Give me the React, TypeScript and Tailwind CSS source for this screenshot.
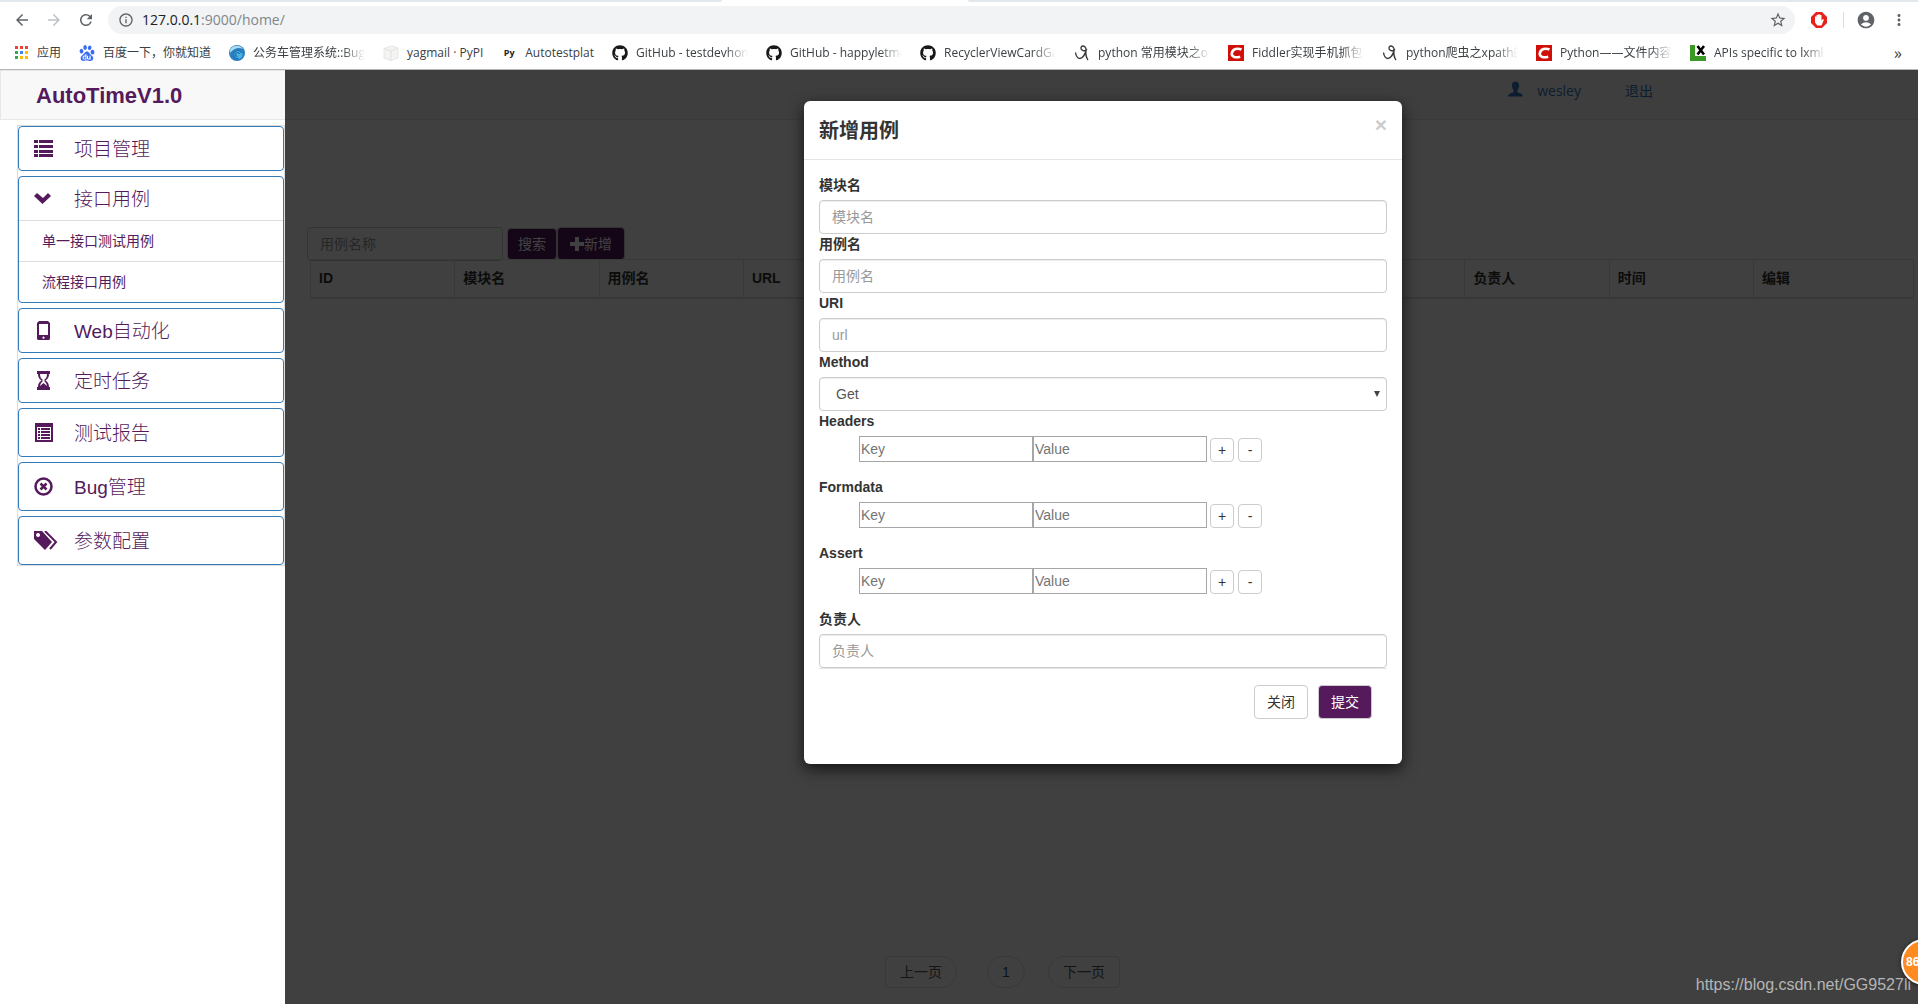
import { useState } from 'react';
import type { ReactNode } from 'react';
import { FaGithub } from 'react-icons/fa';
import {
  MdAccountCircle,
  MdArrowBack,
  MdArrowForward,
  MdInfoOutline,
  MdMoreVert,
  MdRefresh,
  MdStarBorder,
} from 'react-icons/md';
import { SiBaidu } from 'react-icons/si';

interface Bookmark {
  label: string;
  icon: ReactNode;
  clipped?: boolean;
}

interface MenuItem {
  label: string;
  icon: ReactNode;
  tall?: boolean;
  children?: string[];
}

const AppsIcon = () => (
  <svg viewBox="0 0 16 16" className="w-4 h-4">
    {['#ea4335', '#ea4335', '#ea4335', '#34a853', '#4285f4', '#fbbc05', '#34a853', '#fbbc05', '#fbbc05'].map((c, i) => (
      <rect key={i} x={2 + (i % 3) * 5} y={1 + Math.floor(i / 3) * 5} width="3" height="3" fill={c} />
    ))}
  </svg>
);

const GlobeIcon = () => (
  <svg viewBox="0 0 16 16" className="w-4 h-4">
    <circle cx="8" cy="8" r="8" fill="#2b7fc0" />
    <path d="M1 5C3 0 11-1 14 4C10 2 5 3 1 8z" fill="#a9dcf3" />
    <circle cx="9" cy="9.500" r="4.500" fill="#48b3e0" />
    <path d="M12.500 8a4 4 0 1 0-3 5.500M10.500 9a2 2 0 1 0-2 2.500" fill="none" stroke="#1c6fb0" strokeWidth="1.200" />
  </svg>
);

const BoxIcon = () => (
  <svg viewBox="0 0 16 16" className="w-4 h-4">
    <path d="M1 3.500L9 1l6 2v10l-7 2.500L1 13z" fill="#f4f4f2" stroke="#e6e6e6" />
    <path d="M1 3.500L8 6v9.500M8 6l7-3" fill="none" stroke="#e2e2e2" />
  </svg>
);

const PyIcon = () => <span className="w-4 text-center text-[9px] font-bold text-[#222]">Py</span>;

const PenIcon = () => (
  <svg viewBox="0 0 16 16" className="w-4 h-4" fill="none" stroke="#3a3a3a" strokeWidth="1.400">
    <path d="M1.500 7.500C2 11 4 13.500 6 13.500c2.500 0 6-5 6-9C12 2 10 .800 8.500 1S6.200 3.600 8 5s5 .500 4.500-1M12 5c-.500 4 .500 8 2 10" />
  </svg>
);

const CsdnIcon = () => (
  <svg viewBox="0 0 16 16" className="w-4 h-4">
    <rect width="16" height="16" fill="#d01008" />
    <path d="M13.500 4.500C10 3 4.500 3.500 3.800 8.300c-.5 4 4.200 4.700 8.400 3.400" fill="none" stroke="#fff" strokeWidth="2.600" />
  </svg>
);

const LxmlIcon = () => (
  <svg viewBox="0 0 16 16" className="w-4 h-4">
    <rect width="16" height="16" fill="#3b9a25" />
    <rect x="5" width="11" height="11" fill="#fff" />
    <path d="M7.500 1l6.500 8.500M14 1L7.500 9.500" stroke="#000" strokeWidth="2.600" />
  </svg>
);

const bookmarks: Bookmark[] = [
  { label: '应用', icon: <AppsIcon /> },
  { label: '百度一下，你就知道', icon: <SiBaidu className="w-4 h-4 text-[#3a6cf5]" /> },
  { label: '公务车管理系统::Bug管理', icon: <GlobeIcon />, clipped: true },
  { label: 'yagmail · PyPI', icon: <BoxIcon /> },
  { label: 'Autotestplat', icon: <PyIcon /> },
  { label: 'GitHub - testdevhome', icon: <FaGithub className="w-4 h-4 text-[#191717]" />, clipped: true },
  { label: 'GitHub - happyletmego', icon: <FaGithub className="w-4 h-4 text-[#191717]" />, clipped: true },
  { label: 'RecyclerViewCardGallery', icon: <FaGithub className="w-4 h-4 text-[#191717]" />, clipped: true },
  { label: 'python 常用模块之os', icon: <PenIcon />, clipped: true },
  { label: 'Fiddler实现手机抓包——', icon: <CsdnIcon />, clipped: true },
  { label: 'python爬虫之xpath的使用', icon: <PenIcon />, clipped: true },
  { label: 'Python——文件内容', icon: <CsdnIcon />, clipped: true },
  { label: 'APIs specific to lxml.etree', icon: <LxmlIcon />, clipped: true },
];

const menu: MenuItem[] = [
  {
    label: '项目管理',
    icon: <path d="M0 1h4v3H0zM5 1h14v3H5zM0 6h4v3H0zM5 6h14v3H5zM0 11h4v3H0zM5 11h14v3H5zM0 15h4v3H0zM5 15h14v3H5z" />,
  },
  {
    label: '接口用例',
    icon: <path d="M0 7l3-3 6 5 5-5 3 3-8.500 8z" />,
    children: ['单一接口测试用例', '流程接口用例'],
  },
  {
    label: 'Web自动化',
    icon: <path fillRule="evenodd" d="M5 0h9l2 2v16l-1 1H4l-1-1V2zM5 3v11h9V3zM9.500 15l.5 1 1 .2-.8.700.2 1-.9-.5-.9.500.2-1-.8-.700 1-.2z" />,
  },
  {
    label: '定时任务',
    icon: <path fillRule="evenodd" d="M3 0h13v3h-1c0 3-1 5-3.500 6.500C14 11 15 13 15 16h1v3H3v-3h1c0-3 1-5 3.500-6.500C5 8 4 6 4 3H3zM6 3c0 3 1 4.500 2.500 5.500v2C7 12 6.300 13 6 15l3.500-3 3.500 3c-.3-2-1-3-2.500-4.500v-2C12 7.500 13 6 13 3z" />,
  },
  {
    label: '测试报告',
    tall: true,
    icon: <path fillRule="evenodd" d="M1 0h18v19H1zM3 4v13h14V4zM4 5h2v2H4zM7 5h9v2H7zM4 8h2v2H4zM7 8h9v2H7zM4 11h2v2H4zM7 11h9v2H7zM4 14h2v2H4zM7 14h9v2H7z" />,
  },
  {
    label: 'Bug管理',
    tall: true,
    icon: (
      <>
        <circle cx="9.500" cy="9.500" r="8" fill="none" stroke="currentColor" strokeWidth="2.500" />
        <path d="M6.500 6.500l6 6M12.500 6.500l-6 6" stroke="currentColor" strokeWidth="2.500" />
      </>
    ),
  },
  {
    label: '参数配置',
    tall: true,
    icon: (
      <>
        <path fillRule="evenodd" d="M0 0h8l10 11-7 8L0 8zM4 2a2 2 0 1 0 .1 0z" />
        <path d="M11 0l11 11-6 7" fill="none" stroke="currentColor" strokeWidth="2" />
      </>
    ),
  },
];

const columns = ['ID', '模块名', '用例名', 'URL', 'Method', 'Headers', 'Formdata', 'Assert', '负责人', '时间', '编辑'];

const inputClass =
  'block w-full h-[34px] px-3 text-sm text-[#555] bg-white border border-[#ccc] rounded placeholder:text-[#999] shadow-[inset_0_1px_1px_rgba(0,0,0,0.075)]';

function BrowserBar() {
  return (
    <header className="bg-white border-b border-[#b6b4b6] font-['Open_Sans','Noto_Sans_CJK_SC',sans-serif]">
      <div className="flex h-[2px]">
        <div className="w-[722px] bg-[#e3e8ec] rounded-br" />
        <div className="w-[246px]" />
        <div className="flex-1 bg-[#e3e8ec] rounded-bl" />
      </div>
      <div className="flex items-center h-9 pl-[13px] pr-2.5 text-[#5f6368]">
        <button aria-label="Back"><MdArrowBack className="w-[18px] h-[18px]" /></button>
        <button aria-label="Forward" className="ml-[14px] text-[#bdc1c6]"><MdArrowForward className="w-[18px] h-[18px]" /></button>
        <button aria-label="Reload" className="ml-[14px]"><MdRefresh className="w-[18px] h-[18px]" /></button>
        <div className="flex flex-1 items-center h-7 ml-[13px] pl-2.5 pr-2 rounded-full bg-[#f1f3f4] text-sm">
          <MdInfoOutline className="w-4 h-4 mr-2" />
          <span className="text-[#202124]">127.0.0.1</span>
          <span className="text-[#80868b]">:9000/home/</span>
          <button aria-label="Bookmark this page" className="ml-auto"><MdStarBorder className="w-[18px] h-[18px]" /></button>
        </div>
        <button aria-label="AdBlock" className="ml-4">
          <svg viewBox="0 0 16 16" className="w-4 h-4">
            <path d="M5 0h6l5 5v6l-5 5H5l-5-5V5z" fill="#e8201c" />
            <path d="M4 8V5c0-1 1.500-1 1.500 0V3.500c0-1 1.700-1 1.700 0V2.800c0-1 1.700-1 1.700 0v.7c0-1 1.600-1 1.600 0V8.500l1-1c.8-.6 1.700 0 1.200.8L10.500 13.500H6.300L4 10.500z" fill="#fff" />
          </svg>
        </button>
        <span className="w-px h-4 ml-4 bg-[#dadce0]" />
        <button aria-label="Profile" className="ml-3"><MdAccountCircle className="w-5 h-5" /></button>
        <button aria-label="Menu" className="ml-[14px]"><MdMoreVert className="w-[18px] h-[18px]" /></button>
      </div>
      <nav className="flex items-center h-[31px] pl-[13px] pr-4 pb-0.5 gap-[18px] text-xs text-[#3c4043]">
        {bookmarks.map((b, i) => (
          <a key={i} href="#" className="flex items-center gap-2 shrink-0">
            {b.icon}
            <span
              className={
                b.clipped
                  ? 'w-28 overflow-hidden whitespace-nowrap [mask-image:linear-gradient(to_right,#000_80%,transparent)]'
                  : 'whitespace-nowrap'
              }
            >
              {b.label}
            </span>
          </a>
        ))}
        <button aria-label="More bookmarks" className="ml-auto text-base leading-4">»</button>
      </nav>
    </header>
  );
}

function Sidebar() {
  return (
    <aside className="w-[285px] shrink-0 bg-white text-[#551a5b]">
      <div className="h-[50px] pl-[35px] flex items-center bg-[#f8f8f8] border border-r-0 border-[#e7e7e7]">
        <h1 className="text-[22px] font-bold">AutoTimeV1.0</h1>
      </div>
      <nav className="mt-[5px] ml-[17px] border border-[#ddd] flex flex-col gap-[5px]">
        {menu.map(item => (
          <div key={item.label} className="border border-[#337ab7] rounded">
            <a href="#" className={`flex items-center pl-[15px] ${item.tall ? 'h-[47px]' : 'h-[43px]'}`}>
              <svg viewBox="0 0 24 19" className="w-6 h-[19px] mr-4" fill="currentColor">{item.icon}</svg>
              <span className="pt-[3px] text-[19px] font-light">{item.label}</span>
            </a>
            {item.children?.map(child => (
              <a key={child} href="#" className="flex items-center h-[41px] pl-[23px] text-sm border-t border-[#ddd]">
                {child}
              </a>
            ))}
          </div>
        ))}
      </nav>
    </aside>
  );
}

function CaseList() {
  return (
    <div className="flex flex-col flex-1">
      <div className="flex items-start h-[50px] pt-[11px] pr-[265px] justify-end text-sm text-[#337ab7] bg-[#f8f8f8] border-b border-[#e7e7e7] font-['Open_Sans','Noto_Sans_CJK_SC',sans-serif]">
        <a href="#" className="flex">
          <svg viewBox="0 0 14 14" className="w-[15px] h-4 mr-[14px]" fill="currentColor">
            <path d="M7 0c2.300 0 3.500 1.700 3.400 4C10.300 6 9.500 7.500 8.700 8.300v1.500c2 1 5.300 1.600 5.300 4.200H0c0-2.600 3.300-3.200 5.300-4.200V8.300C4.500 7.500 3.700 6 3.600 4 3.500 1.700 4.700 0 7 0z" />
          </svg>
          wesley
        </a>
        <a href="#" className="ml-11">退出</a>
      </div>
      <form className="flex items-end mt-[107px] ml-[22px]" onSubmit={e => e.preventDefault()}>
        <input aria-label="用例名称" placeholder="用例名称" className="w-[196px] h-[34px] px-3 text-sm border border-[#ccc] rounded placeholder:text-[#999]" />
        <button className="h-8 ml-1 mb-px px-[10px] text-sm text-white bg-[#551a5b] border border-[#ccc] rounded">搜索</button>
        <button type="button" className="flex items-center h-[33px] mb-px px-3 text-sm text-white bg-[#551a5b] border border-[#ccc] rounded">
          <svg viewBox="0 0 14 14" className="w-[14px] h-[14px]" fill="currentColor"><path d="M5 0h4v5h5v4H9v5H5V9H0V5h5z" /></svg>
          新增
        </button>
      </form>
      <div className="-mt-0.5 ml-[25px] mr-1">
        <table className="w-full table-fixed border-collapse text-sm text-[#333]">
          <thead>
            <tr>
              {columns.map(c => (
                <th key={c} className="h-[38px] px-2 text-left font-bold border border-b-2 border-[#ddd] last:w-40">{c}</th>
              ))}
            </tr>
          </thead>
        </table>
      </div>
      <div className="flex mt-auto mb-4 pl-[600px] text-sm text-[#555]">
        <button className="w-[72px] h-8 border border-[#ddd] rounded-l rounded-r-2xl">上一页</button>
        <button className="w-[38px] h-8 ml-[30px] text-[#23527c] border border-[#ddd] rounded-full">1</button>
        <button className="w-[72px] h-8 ml-[23px] border border-[#ddd] rounded-r rounded-l-2xl">下一页</button>
      </div>
    </div>
  );
}

function TextField({ id, label, placeholder }: { id: string; label: string; placeholder: string }) {
  return (
    <div>
      <label htmlFor={id} className="block mb-[5px] text-sm font-bold">{label}</label>
      <input id={id} placeholder={placeholder} className={inputClass} />
    </div>
  );
}

function PairField({ label }: { label: string }) {
  const [rows, setRows] = useState(1);
  const pair = 'w-[174px] h-[26px] px-px text-sm border border-[#a6a6a6] placeholder:text-[#757575]';
  const small = 'w-6 h-6 text-sm border border-[#ccc] rounded';

  return (
    <fieldset className="pb-[15px]">
      <legend className="mb-[5px] text-sm font-bold">{label}</legend>
      {Array.from({ length: rows }, (_, i) => (
        <div key={i} className="flex items-end pl-10">
          <input aria-label={`${label} key`} placeholder="Key" className={pair} />
          <input aria-label={`${label} value`} placeholder="Value" className={pair} />
          <button type="button" className={`${small} ml-[3px]`} onClick={() => setRows(rows + 1)}>+</button>
          <button type="button" className={`${small} ml-1`} onClick={() => setRows(Math.max(1, rows - 1))}>-</button>
        </div>
      ))}
    </fieldset>
  );
}

function CaseModal({ onClose }: { onClose: () => void }) {
  return (
    <div className="absolute inset-0 flex items-start justify-center pt-[31px] pl-[3px] bg-black/75">
      <div role="dialog" aria-label="新增用例" className="w-[598px] rounded-md bg-white text-[#333] shadow-[0_5px_15px_rgba(0,0,0,0.7)]">
        <div className="flex items-start justify-between h-[59px] px-[15px] pt-[13px] border-b border-[#e5e5e5]">
          <h2 className="text-xl leading-[34px] font-bold">新增用例</h2>
          <button aria-label="Close" onClick={onClose} className="text-[21px] leading-[21px] font-bold text-[#ccc]">×</button>
        </div>
        <form className="px-[15px] pt-[15px]" onSubmit={e => e.preventDefault()}>
          <TextField id="module" label="模块名" placeholder="模块名" />
          <TextField id="case-name" label="用例名" placeholder="用例名" />
          <TextField id="uri" label="URI" placeholder="url" />
          <label htmlFor="method" className="block mb-[5px] text-sm font-bold">Method</label>
          <div className="relative">
            <select id="method" className={`${inputClass} pl-4 appearance-none`}>
              <option>Get</option>
              <option>Post</option>
            </select>
            <svg viewBox="0 0 6 6" className="absolute right-[7px] top-[14px] w-[6px] h-[6px] pointer-events-none" fill="#444"><path d="M0 0h6L3 6z" /></svg>
          </div>
          <PairField label="Headers" />
          <PairField label="Formdata" />
          <PairField label="Assert" />
          <TextField id="owner" label="负责人" placeholder="负责人" />
          <div className="flex justify-end gap-[10px] pt-4 px-[15px] pb-[45px] border-t border-[#e5e5e5]">
            <button type="button" onClick={onClose} className="h-[34px] px-3 text-sm bg-white border border-[#ccc] rounded">关闭</button>
            <button className="h-[34px] px-3 text-sm text-white bg-[#551a5b] border border-[#ccc] rounded">提交</button>
          </div>
        </form>
      </div>
    </div>
  );
}

export default function App() {
  const [open, setOpen] = useState(true);

  return (
    <div className="flex flex-col min-h-screen overflow-hidden bg-white font-['Liberation_Sans','Noto_Sans_CJK_SC',sans-serif]">
      <BrowserBar />
      <div className="flex flex-1">
        <Sidebar />
        <main className="relative flex flex-col flex-1 min-w-0">
          <CaseList />
          {open && <CaseModal onClose={() => setOpen(false)} />}
          <span className="absolute right-[7px] bottom-[7px] text-base text-[#b5b5b5]">https://blog.csdn.net/GG9527li</span>
          <div className="absolute -right-[29px] bottom-[19px] flex items-center w-[46px] h-[46px] pl-[3px] rounded-full border-2 border-white bg-[#ff8a1f] text-xs font-bold text-white shadow-[0_1px_4px_rgba(0,0,0,0.6)]">
            86
          </div>
        </main>
      </div>
    </div>
  );
}
